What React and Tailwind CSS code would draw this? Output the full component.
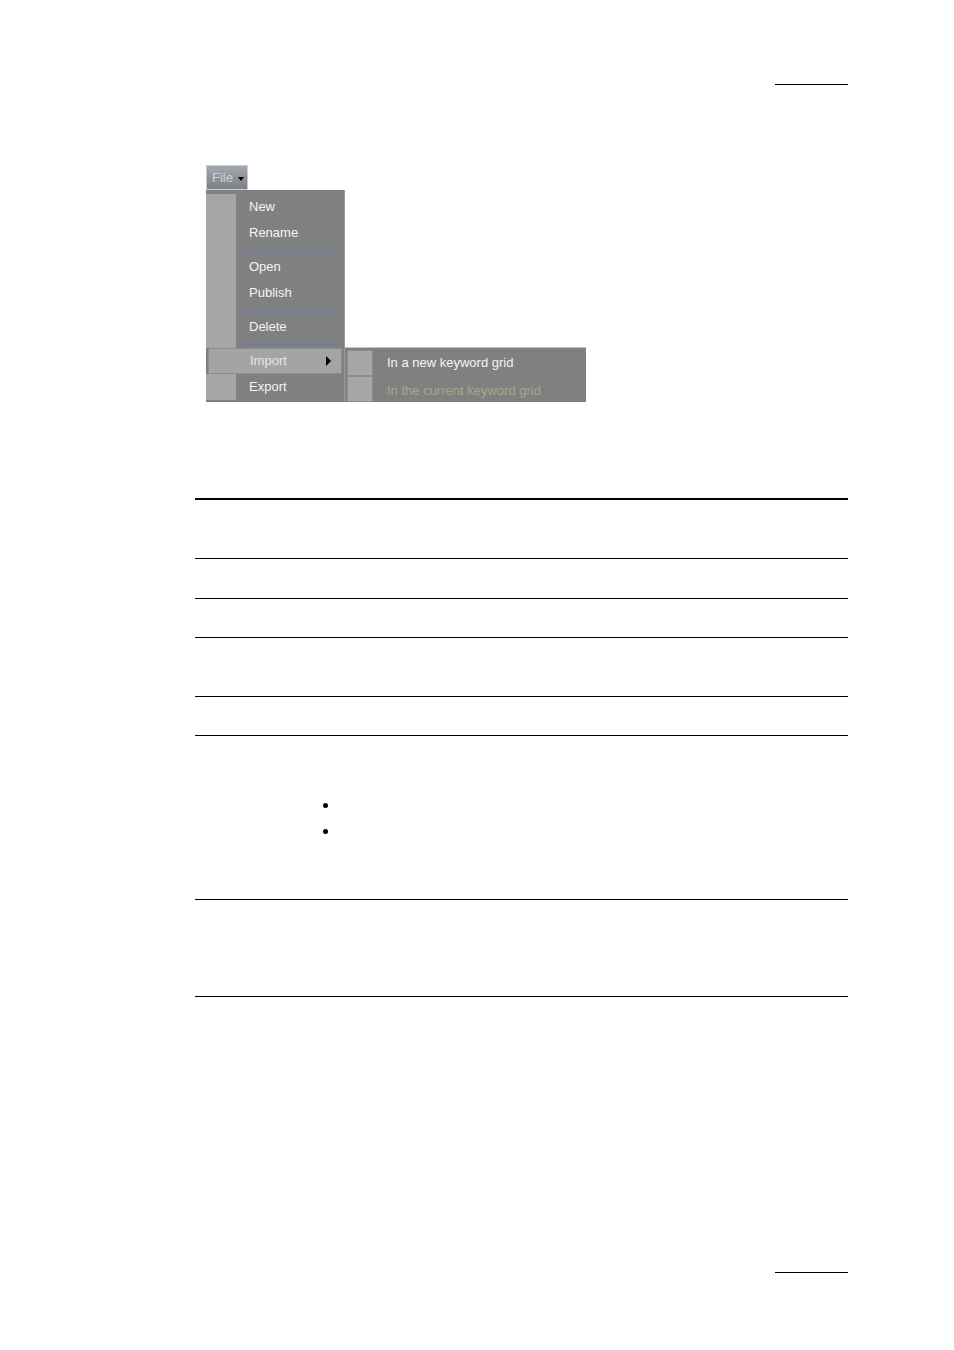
import React from 'react';

const font = { fontFamily: '"Liberation Sans", Arial, sans-serif' };

const MenuItem = ({ label, highlight, arrow }) => (
    <div className={`relative flex h-[26px] items-center ${highlight ? 'mx-[2px] border border-[#8c8c8c] bg-[#a4a4a4]' : ''}`}>
        <div className={`h-full shrink-0 ${highlight ? 'w-[28px]' : 'w-[30px] bg-[#a6a6a6]'}`}></div>
        <span className={`pl-[13px] text-[13px] ${highlight ? 'text-[#e4e4e4]' : 'text-[#f4f4f4]'}`}>{label}</span>
        {arrow && (
            <span className="absolute right-[10px] top-1/2 -translate-y-1/2 h-0 w-0 border-y-[5px] border-l-[5px] border-y-transparent border-l-black"></span>
        )}
    </div>
);

const Separator = () => (
    <div className="flex h-[8px]">
        <div className="w-[30px] shrink-0 bg-[#a6a6a6]"></div>
        <div className="flex-1 flex items-center pl-[7px] pr-[1px]">
            <div className="h-px w-full bg-[#5c7cc4]"></div>
        </div>
    </div>
);

const SubItem = ({ label, disabled, h = 'h-[27px]' }) => (
    <div className={`flex ${h} items-center`}>
        <div className="ml-[2px] h-[26px] w-[26px] shrink-0 border border-[#8c8c8c] bg-[#a6a6a6]"></div>
        <span className={`pl-[14px] text-[13px] ${disabled ? 'mt-[3px] text-[#a8a48e]' : 'text-[#f4f4f4]'}`}>{label}</span>
    </div>
);

const App = () => {
    return (
        <div className="w-[954px] h-[1350px] bg-white" style={font}>
            {/* header rule */}
            <div className="pt-[84px]">
                <div className="ml-[775px] h-px w-[73px] bg-black"></div>
            </div>

            {/* File menu screenshot */}
            <div className="ml-[206px] mt-[80px]">
                <div className="flex h-[25px] w-[42px] items-center gap-[5px] border border-[#c8ccd2] bg-gradient-to-b from-[#a4a9b0] to-[#7c7f84] pl-[5px]">
                    <span className="text-[13px] text-[#cfd3d8]">File</span>
                    <span className="mt-[2px] h-0 w-0 border-x-[3px] border-t-[4px] border-x-transparent border-t-black"></span>
                </div>
                <div className="flex items-start">
                    <div className="w-[139px] border-r border-[#9a9a9a] bg-[#808080] pt-[4px] pb-[2px]">
                        <MenuItem label="New" />
                        <MenuItem label="Rename" />
                        <Separator />
                        <MenuItem label="Open" />
                        <MenuItem label="Publish" />
                        <Separator />
                        <MenuItem label="Delete" />
                        <Separator />
                        <MenuItem label="Import" highlight arrow />
                        <MenuItem label="Export" />
                    </div>
                    <div className="mt-[157px] w-[241px] border-t border-[#c4c4c4] bg-[#808080] pt-[1px]">
                        <SubItem label="In a new keyword grid" />
                        <SubItem label="In the current keyword grid" disabled h="h-[26px]" />
                    </div>
                </div>
            </div>

            {/* table rules */}
            <div className="ml-[195px] mt-[96px] w-[653px]">
                <div className="h-[60px] border-t-2 border-black"></div>
                <div className="h-[40px] border-t border-black"></div>
                <div className="h-[39px] border-t border-black"></div>
                <div className="h-[59px] border-t border-black"></div>
                <div className="h-[39px] border-t border-black"></div>
                <div className="h-[164px] border-t border-black pt-[56px] pl-[128px]">
                    <div className="flex h-[26px] items-center">
                        <span className="h-[5px] w-[5px] rounded-full bg-black"></span>
                    </div>
                    <div className="flex h-[26px] items-center">
                        <span className="h-[5px] w-[5px] rounded-full bg-black"></span>
                    </div>
                </div>
                <div className="h-[97px] border-t border-black"></div>
                <div className="border-t border-black"></div>
            </div>

            {/* footer rule */}
            <div className="ml-[775px] mt-[275px] h-px w-[73px] bg-black"></div>
        </div>
    );
};

export default App;
